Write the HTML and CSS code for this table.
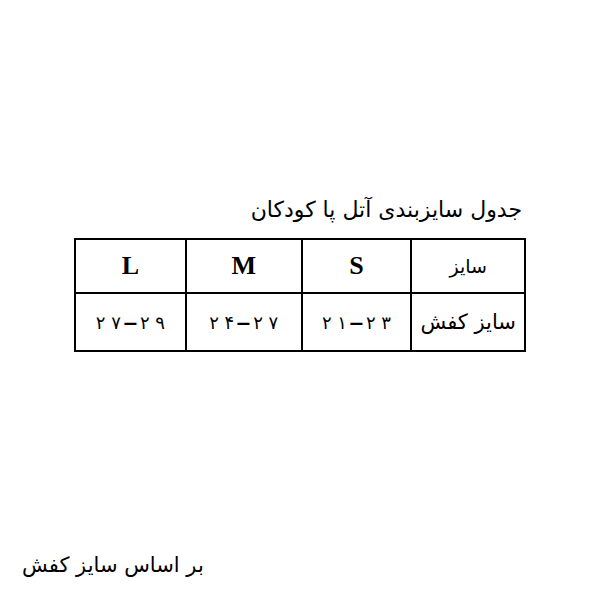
FILE: index.html
```html
<!DOCTYPE html>
<html lang="fa" dir="rtl">
<head>
<meta charset="utf-8">
<link rel="stylesheet" href="styles.css">
</head>
<body>
<div class="page">
  <h1 class="title">جدول سایزبندی آتل پا کودکان</h1>
  <table class="size-table">
    <tr class="head">
      <td class="label">سایز</td>
      <td class="latin">S</td>
      <td class="latin">M</td>
      <td class="latin">L</td>
    </tr>
    <tr class="body-row">
      <td class="label label-lg">سایز کفش</td>
      <td class="num"><span dir="ltr">۲ ۱<span class="dash">–</span>۲ ۳</span></td>
      <td class="num"><span dir="ltr">۲ ۴<span class="dash">–</span>۲ ۷</span></td>
      <td class="num"><span dir="ltr">۲ ۷<span class="dash">–</span>۲ ۹</span></td>
    </tr>
  </table>
  <p class="note">بر اساس سایز کفش</p>
</div>
</body>
</html>
```
FILE: styles.css
```css
html, body {
  margin: 0;
  padding: 0;
  background: #fff;
}
.page {
  width: 600px;
  height: 600px;
  display: flex;
  flex-direction: column;
  font-family: "DejaVu Sans", sans-serif;
  color: #000;
}
.title {
  margin: 195px 78px 0 0;
  font-size: 22px;
  font-weight: normal;
  line-height: 30px;
  height: 30px;
}
.size-table {
  margin: 13px 74px 0 0;
  border-collapse: collapse;
  width: 452px;
}
.size-table td {
  border: 2px solid #000;
  text-align: center;
  padding: 0;
}
.head td { height: 52px; }
.body-row td { height: 56px; }
.size-table td:nth-child(1) { width: 112px; }
.size-table td:nth-child(2) { width: 108px; }
.size-table td:nth-child(3) { width: 114px; }
.size-table td:nth-child(4) { width: 109px; }
.latin {
  font-family: "Liberation Serif", serif;
  font-weight: bold;
  font-size: 26px;
}
.label {
  font-size: 19px;
}
.label-lg {
  font-size: 21px;
}
.num {
  font-size: 18px;
  white-space: nowrap;
}
.dash {
  display: inline-block;
  width: 15px;
  margin: 0 2px;
  text-align: center;
  font-weight: bold;
  transform: scaleX(1.7);
}
.note {
  margin: auto 0 22px 0;
  align-self: flex-end;
  padding-left: 22px;
  font-size: 21px;
  line-height: 26px;
}
```
